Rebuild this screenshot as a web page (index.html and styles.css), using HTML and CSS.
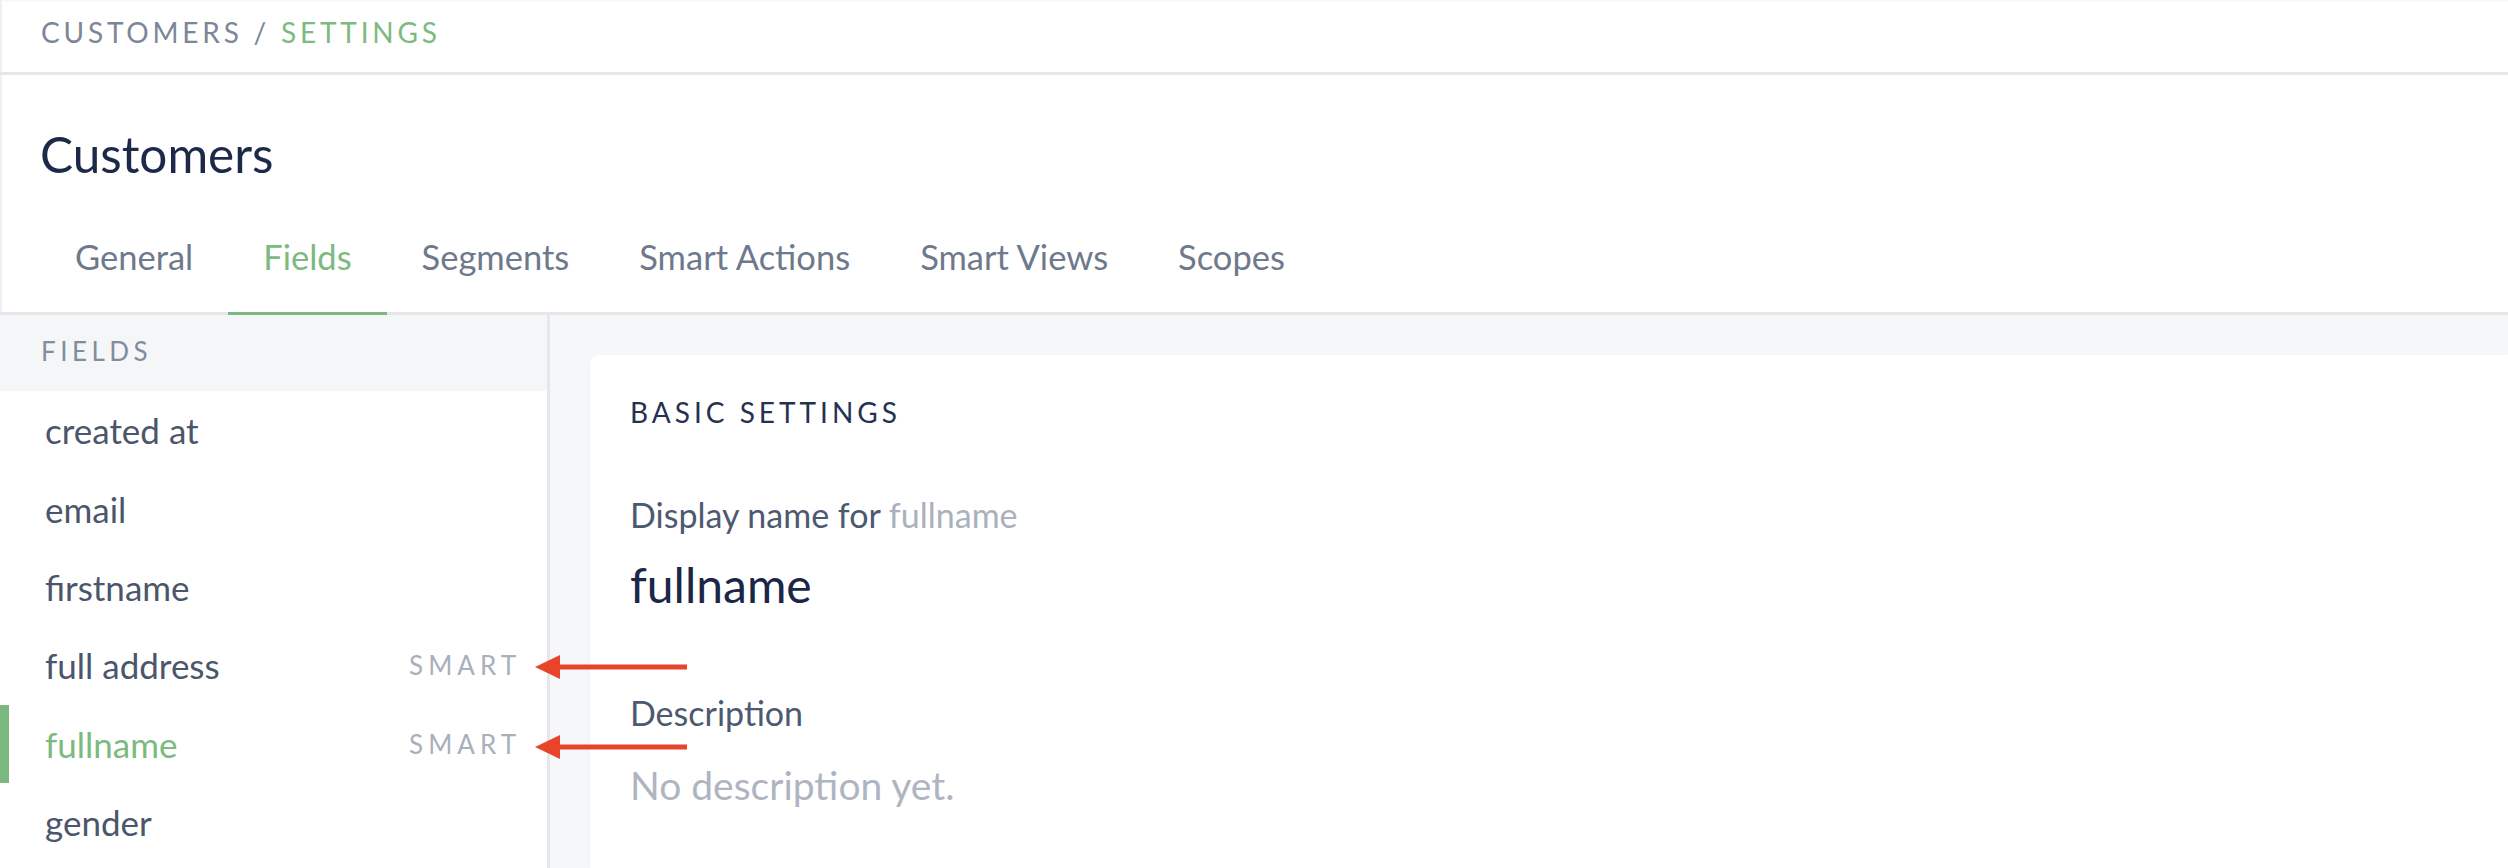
FILE: index.html
```html
<!DOCTYPE html>
<html lang="en">
<head>
<meta charset="utf-8">
<title>Customers / Settings</title>
<link rel="stylesheet" href="styles.css">
</head>
<body>
<div class="page">
  <header class="topbar">
    <nav class="crumbs"><span class="crumb">CUSTOMERS</span><span class="sep"> / </span><span class="crumb current">SETTINGS</span></nav>
  </header>
  <section class="head">
    <h1 class="title">Customers</h1>
    <nav class="tabs">
      <a class="tab">General</a>
      <a class="tab active">Fields</a>
      <a class="tab">Segments</a>
      <a class="tab">Smart Actions</a>
      <a class="tab">Smart Views</a>
      <a class="tab">Scopes</a>
    </nav>
  </section>
  <main class="main">
    <aside class="sidebar">
      <div class="side-head">FIELDS</div>
      <ul class="fields">
        <li class="field"><span>created at</span></li>
        <li class="field"><span>email</span></li>
        <li class="field"><span>firstname</span></li>
        <li class="field"><span>full address</span><span class="tag">SMART</span></li>
        <li class="field active"><span>fullname</span><span class="tag">SMART</span></li>
        <li class="field"><span>gender</span></li>
      </ul>
    </aside>
    <section class="panel">
      <div class="card">
        <h2 class="card-title">BASIC SETTINGS</h2>
        <div class="label label-display">Display name for <span class="hint">fullname</span></div>
        <div class="value">fullname</div>
        <div class="label label-desc">Description</div>
        <div class="empty">No description yet.</div>
      </div>
    </section>
  </main>
  <svg class="arrow arrow-1" width="152" height="24" viewBox="0 0 152 24" aria-hidden="true"><polygon points="0,12 25,0 25,24" /><rect x="22" y="9.5" width="130" height="5" /></svg>
  <svg class="arrow arrow-2" width="152" height="24" viewBox="0 0 152 24" aria-hidden="true"><polygon points="0,12 25,0 25,24" /><rect x="22" y="9.5" width="130" height="5" /></svg>
</div>
</body>
</html>
```
FILE: styles.css
```css
* { box-sizing: border-box; }
html, body { margin: 0; padding: 0; }
body {
  font-family: Lato, "Open Sans", sans-serif;
  background: #ffffff;
  overflow: hidden;
}
.page {
  position: relative;
  width: 2508px;
  height: 868px;
  overflow: hidden;
  box-shadow: inset 2px 0 0 #eff0f2, inset 0 2px 2px -1px rgba(0,0,0,0.05);
}
.topbar {
  height: 75px;
  border-bottom: 3px solid #e5e7eb;
  padding: 0 0 8px 41px;
  display: flex;
  align-items: center;
}
.crumbs {
  font-size: 28px;
  letter-spacing: 3.8px;
  color: #7c8698;
  line-height: 34px;
}
.crumb.current { color: #7cba80; }
.head {
  padding: 49px 0 0 0;
}
.title {
  margin: 0 0 18px 40px;
  font-size: 49.5px;
  font-weight: 400;
  line-height: 60px;
  color: #1c2949;
}
.tabs {
  display: flex;
  padding-left: 40px;
  border-bottom: 3px solid #e5e7eb;
}
.tab {
  padding: 35px 35px;
  line-height: 40px;
  font-size: 34.5px;
  color: #6e798c;
  border-bottom: 3px solid transparent;
  margin-bottom: -3px;
}
.tab.active {
  color: #7cba80;
  border-bottom-color: #7ab87f;
}
.main {
  display: flex;
  height: 553px;
}
.sidebar {
  width: 550px;
  flex: none;
  border-right: 3px solid #e5e7eb;
  background: #ffffff;
}
.side-head {
  height: 76px;
  padding: 0 0 4px 41px;
  line-height: 72px;
  font-size: 26px;
  letter-spacing: 4.5px;
  color: #838c9c;
  background: #f5f6f8;
}
.fields {
  list-style: none;
  margin: 0;
  padding: 0;
}
.field {
  height: 78.4px;
  display: flex;
  align-items: center;
  justify-content: space-between;
  padding: 0 26px 0 45px;
  font-size: 35px;
  color: #4b566b;
}
.field.active {
  color: #7cba80;
  box-shadow: inset 9px 0 0 #7ab87f;
}
.tag {
  font-size: 26px;
  letter-spacing: 5px;
  color: #a9b0bb;
}
.panel {
  flex: 1;
  background: #f6f7f9;
  padding: 40px 0 0 40px;
}
.card {
  background: #ffffff;
  height: 100%;
  border-radius: 10px 0 0 0;
  padding: 40px 0 0 40px;
  box-shadow: -1px 0 2px rgba(0,0,0,0.02);
}
.card-title {
  margin: 0;
  font-size: 28px;
  font-weight: 400;
  letter-spacing: 4px;
  line-height: 34px;
  color: #253150;
}
.label {
  font-size: 34px;
  line-height: 40px;
  color: #4d5970;
}
.label-display { margin-top: 66px; }
.label-desc { margin-top: 79px; }
.hint { color: #a9b1bd; }
.value {
  margin-top: 21px;
  font-size: 48px;
  line-height: 58px;
  color: #1b2747;
}
.empty {
  margin-top: 29px;
  font-size: 39px;
  line-height: 46px;
  color: #aeb5c1;
}
.arrow {
  position: absolute;
  left: 535px;
  fill: #e8432b;
}
.arrow-1 { top: 655px; }
.arrow-2 { top: 735px; }
```
